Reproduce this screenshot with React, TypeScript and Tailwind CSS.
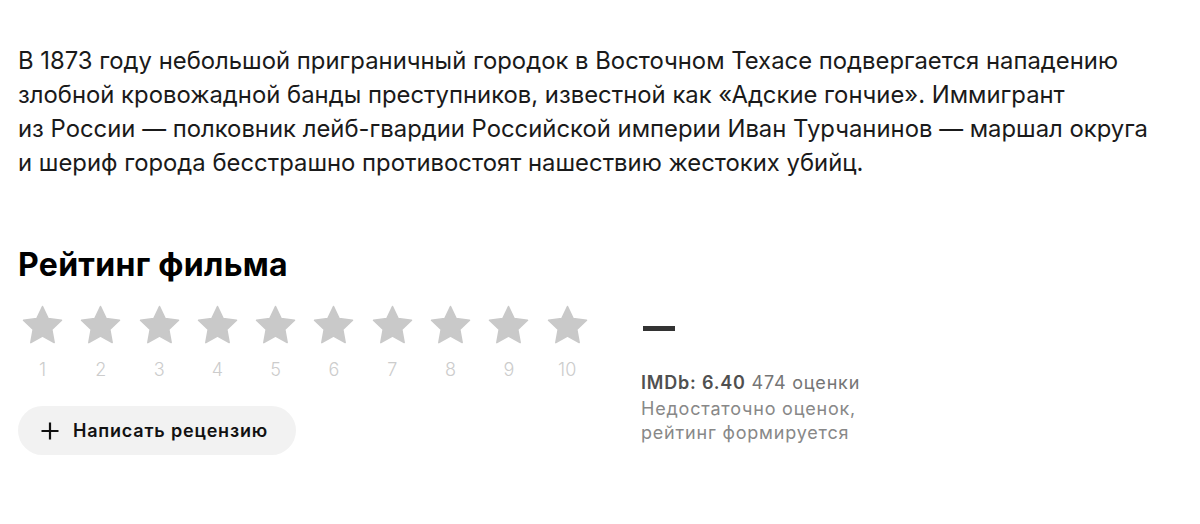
import React from "react";

const lines = [
  "В 1873 году небольшой приграничный городок в Восточном Техасе подвергается нападению",
  "злобной кровожадной банды преступников, известной как «Адские гончие». Иммигрант",
  "из России — полковник лейб-гвардии Российской империи Иван Турчанинов — маршал округа",
  "и шериф города бесстрашно противостоят нашествию жестоких убийц.",
];

function Star() {
  return (
    <svg width="41" height="40" viewBox="0 0 41 40" className="block">
      <polygon
        points="20.5,1.5 26.2,13.6 39.5,15.3 29.8,24.5 32.2,37.6 20.5,31.2 8.8,37.6 11.2,24.5 1.5,15.3 14.8,13.6"
        fill="#c9c9c9"
        stroke="#c9c9c9"
        strokeWidth="1.5"
        strokeLinejoin="round"
      />
    </svg>
  );
}

export default function App() {
  return (
    <div className="w-[1200px] h-[524px] bg-white overflow-hidden px-[18px] pt-[44px] font-[Inter,'Noto_Sans',sans-serif]">
      <p className="text-[23.85px] leading-[34px] text-[#1a1a1a]">
        {lines.map((l) => (
          <span key={l} className="block whitespace-nowrap">
            {l}
          </span>
        ))}
      </p>

      <h2 className="mt-[69px] text-[32px] leading-[32px] font-bold text-black tracking-[0.3px]">
        Рейтинг фильма
      </h2>

      <div className="flex mt-[24px]">
        <div className="w-[623px] shrink-0">
          <div className="flex gap-[17.3px] pl-[4px]">
            {Array.from({ length: 10 }, (_, i) => (
              <div key={i} className="flex flex-col items-center w-[41px]">
                <Star />
                <span className="mt-[13px] text-[18px] leading-[24px] font-light text-[#cccccc]">
                  {i + 1}
                </span>
              </div>
            ))}
          </div>

          <button className="mt-[24px] h-[49px] w-[278px] rounded-full bg-[#f2f2f2] flex items-center pl-[22px] gap-[13px]">
            <svg width="20" height="20" viewBox="0 0 20 20">
              <path d="M10 1.5v17M1.5 10h17" stroke="#111" strokeWidth="2.2" />
            </svg>
            <span className="text-[18px] font-semibold text-[#111] tracking-[0.8px]">Написать рецензию</span>
          </button>
        </div>

        <div className="pt-[21px]">
          <div className="ml-[2px] w-[32px] h-[5px] bg-[#333]" />
          <div className="mt-[40px] text-[18px] leading-[24px] tracking-[0.8px]">
            <div>
              <span className="font-semibold text-[#505050]">IMDb: 6.40</span>{" "}
              <span className="text-[#757575]">474 оценки</span>
            </div>
            <div className="mt-[2px] text-[#888]">Недостаточно оценок,</div>
            <div className="text-[#888]">рейтинг формируется</div>
          </div>
        </div>
      </div>
    </div>
  );
}
